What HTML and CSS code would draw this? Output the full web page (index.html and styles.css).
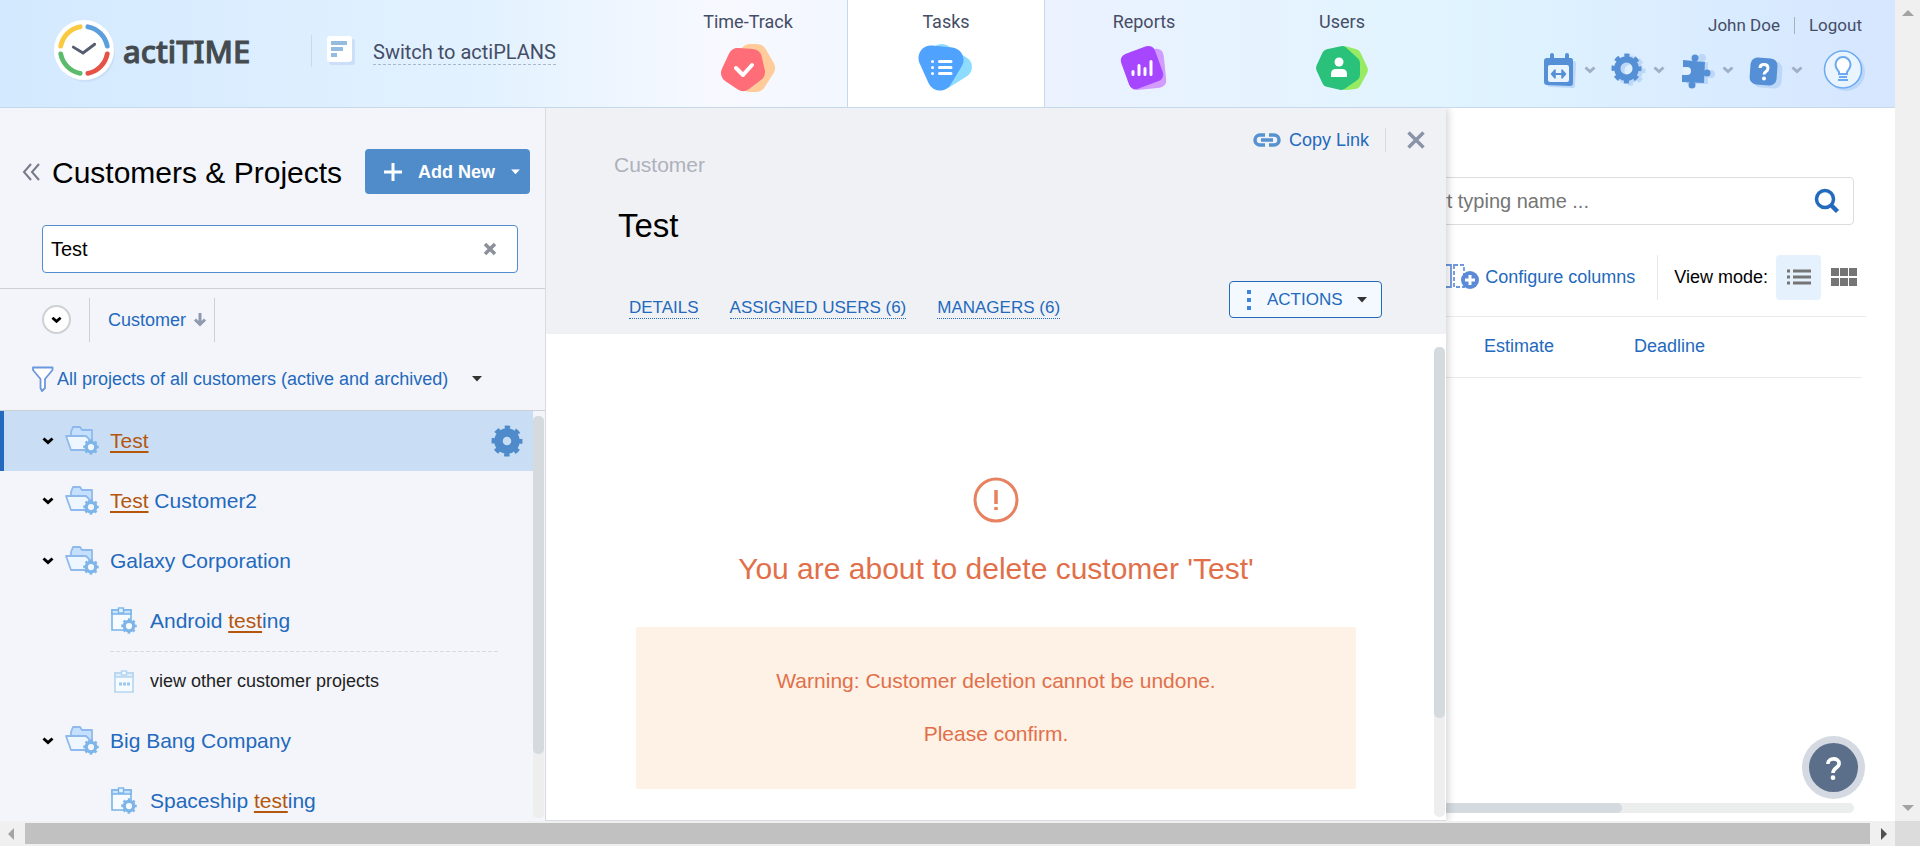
FILE: index.html
```html
<!DOCTYPE html>
<html lang="en">
<head>
<meta charset="utf-8">
<title>actiTIME - Tasks</title>
<link rel="stylesheet" href="styles.css">
</head>
<body>
<svg class="defs" aria-hidden="true">
  <symbol id="gear" viewBox="0 0 32 32">
    <circle cx="16" cy="16" r="8.500" fill="none" stroke="currentColor" stroke-width="8.500"/>
    <circle cx="16" cy="16" r="13.500" fill="none" stroke="currentColor" stroke-width="4" stroke-dasharray="5.300 5.300" stroke-dashoffset="2.650"/>
  </symbol>
  <symbol id="gear-open" viewBox="0 0 32 32">
    <circle cx="16" cy="16" r="9.500" fill="none" stroke="currentColor" stroke-width="6.500"/>
    <circle cx="16" cy="16" r="13.500" fill="none" stroke="currentColor" stroke-width="4" stroke-dasharray="5.300 5.300" stroke-dashoffset="2.650"/>
  </symbol>
  <symbol id="folder" viewBox="0 0 34 32">
    <path d="M6 12V7L8 2H15L17 5H27V20H8Z" fill="#c5e0ff" stroke="#8fb9ec" stroke-width="1.8" stroke-linejoin="round"/>
    <path d="M1 11H21L24 14V25H6Z" fill="#eef6ff" stroke="#8fb9ec" stroke-width="1.8" stroke-linejoin="round"/>
    <circle cx="26" cy="22" r="5" fill="#f3f7fd"/>
    <g class="tone-gear"><use href="#gear-open" x="18" y="14" width="16" height="16"/></g>
  </symbol>
  <symbol id="project" viewBox="0 0 28 28">
    <path d="M2 3H21V23H2Z" fill="#f6fbff" stroke="#79b4ea" stroke-width="1.6"/>
    <path d="M2 3H21V7H2Z" fill="#c9e3fb" stroke="#79b4ea" stroke-width="1.4"/>
    <rect x="8.500" y="1" width="5" height="5" fill="#e6f3ff" stroke="#79b4ea" stroke-width="1.4"/>
    <circle cx="19" cy="19" r="5" fill="#f6fbff"/>
    <g class="tone-gear"><use href="#gear-open" x="11" y="11" width="16" height="16"/></g>
  </symbol>
  <symbol id="chev" viewBox="0 0 12 8"><path d="M1.500 1.500 6 5.500 10.500 1.500" fill="none" stroke="currentColor" stroke-width="3"/></symbol>
  <symbol id="caret" viewBox="0 0 10 6"><path d="M0 0H10L5 5.500Z" fill="currentColor"/></symbol>
</svg>

<div class="window">
  <div class="app">
    <header class="header">
      <div class="brand">
        <svg class="logo" viewBox="0 0 64 66" aria-hidden="true">
          <circle cx="34" cy="35" r="30" fill="#cbdff8"/>
          <circle cx="32" cy="32" r="31" fill="#fff"/>
          <g fill="none" stroke-width="5" stroke-linecap="round">
            <path d="M36 8A25 25 0 0 1 56 28" stroke="#5c9fdc"/>
            <path d="M56 36A25 25 0 0 1 36 56" stroke="#e75247"/>
            <path d="M28 56A25 25 0 0 1 8 36" stroke="#5bbb6b"/>
            <path d="M8 28A25 25 0 0 1 28 8" stroke="#f9c940"/>
            <path d="M21 29 31 35 43 26" stroke="#565d70" stroke-width="3"/>
          </g>
        </svg>
        <span class="wordmark">actiTIME</span>
        <div class="switch">
          <svg class="plans" viewBox="0 0 28 30" aria-hidden="true">
            <rect x="2" y="3" width="26" height="26" rx="3" fill="#cbdff8"/>
            <rect width="25" height="26" rx="3" fill="#fff"/>
            <g stroke="#94bce0" stroke-width="4"><path d="M4 7H20M4 13H16M4 19H10"/></g>
          </svg>
          <a href="#plans">Switch to actiPLANS</a>
        </div>
      </div>
      <nav class="nav">
        <a href="#time">Time-Track
          <svg viewBox="0 0 64 56"><g stroke-linejoin="round">
            <path d="M34 14H41L49 28 40 42H34L24 26Z" fill="#ffcb9b" stroke="#ffcb9b" stroke-width="20"/>
            <path d="M22 18 36 19 39 32 27 41 15 33Z" fill="#ff6d79" stroke="#ff6d79" stroke-width="20"/></g>
            <path d="M20 28 27 35 36 25" fill="none" stroke="#fff" stroke-width="4" stroke-linecap="round" stroke-linejoin="round"/></svg></a>
        <a href="#tasks" class="active" aria-current="page">Tasks
          <svg viewBox="0 0 64 56"><g stroke-linejoin="round">
            <path d="M28 15 47 27 28 39Z" fill="#8ddcff" stroke="#8ddcff" stroke-width="22"/>
            <path d="M17 18 37 20 26 38Z" fill="#4fa3ff" stroke="#4fa3ff" stroke-width="25"/></g>
            <path d="M18.500 21.500v.01M18.500 27.500v.01M18.500 33.500v.01M25.500 21.500H37M25.500 27.500H37M25.500 33.500H37" stroke="#fff" stroke-width="3" stroke-linecap="round"/></svg></a>
        <a href="#reports">Reports
          <svg viewBox="0 0 64 56">
            <rect x="16" y="10" width="37" height="39" rx="7" fill="#d29cff" transform="rotate(-6 34 29)"/>
            <rect x="12" y="9" width="36" height="37" rx="7" fill="#a646ff" transform="rotate(-20 30 27.500)"/>
            <path d="M21 31.500V34.500M27 25.500V34.500M33 28.500V34.500M39 21.500V34.500" stroke="#fff" stroke-width="3" stroke-linecap="round"/></svg></a>
        <a href="#users">Users
          <svg viewBox="0 0 64 56"><g stroke-linejoin="round">
            <path d="M34 12 45 15 52 30 45 43 36 44 30 28Z" fill="#97eb62" stroke="#97eb62" stroke-width="12"/>
            <path d="M12 28 18 15 32 12 44 23V35L31 44 18 41Z" fill="#2ac27b" stroke="#2ac27b" stroke-width="12"/></g>
            <circle cx="29" cy="22" r="4.500" fill="#fff"/><path d="M21 37V34Q21 29 26 29H32Q37 29 37 34V37Z" fill="#fff"/></svg></a>
      </nav>
      <div class="account">
        <div class="account-links"><a href="#me">John Doe</a><span class="bar"></span><a href="#logout">Logout</a></div>
        <div class="tools">
          <button type="button" aria-label="Calendar"><svg class="tool" viewBox="0 0 36 40">
            <path d="M4 11H30Q32 11 32 14L31 36Q31 38 28 38L7 37Q3 37 3 34Z" fill="#bcd7f8"/>
            <path d="M3 8H27Q29 8 29 11V33Q29 36 26 36L3 35Q0 35 0 32V11Q0 8 3 8Z" fill="#5590d6"/>
            <path d="M8 5V9M23 5V9" stroke="#5590d6" stroke-width="4" stroke-linecap="round"/>
            <rect x="4" y="15" width="21" height="17" rx="2" fill="#e9f4ff"/>
            <path d="M9 24H20" stroke="#5590d6" stroke-width="2"/>
            <path d="M11 20 7.500 24 11 28ZM18 20 21.500 24 18 28Z" fill="#5590d6" stroke="#5590d6" stroke-width="1.5" stroke-linejoin="round"/></svg>
            <svg class="tool-chev" viewBox="0 0 12 8"><use href="#chev"/></svg></button>
          <button type="button" aria-label="Settings"><svg class="tool" viewBox="0 0 36 40">
            <g class="tone-shadow"><use href="#gear-open" x="2" y="5" width="31" height="31"/></g>
            <g class="tone-tool"><use href="#gear-open" x="-2" y="3" width="31" height="31"/></g></svg>
            <svg class="tool-chev" viewBox="0 0 12 8"><use href="#chev"/></svg></button>
          <button type="button" aria-label="Integrations"><svg class="tool" viewBox="0 0 36 40">
            <g fill="#bcd7f8"><circle cx="20" cy="8" r="4"/><circle cx="29" cy="24" r="4"/><path d="M5 12H26V34H5Z"/></g>
            <g fill="#5590d6"><circle cx="13" cy="8" r="3.500"/><circle cx="25" cy="23" r="3.500"/><circle cx="10" cy="35" r="3.500"/>
            <path d="M1 10 23 12 22 33 0 32V25H3A4 4 0 0 0 3 17H1Z"/></g>
            <circle cx="5" cy="21" r="4" fill="#e3f1ff"/></svg>
            <svg class="tool-chev" viewBox="0 0 12 8"><use href="#chev"/></svg></button>
          <button type="button" aria-label="Help"><svg class="tool" viewBox="0 0 36 40">
            <rect x="3" y="11" width="28" height="27" rx="7" fill="#bcd7f8" transform="rotate(4 17 24)"/>
            <rect x="-1" y="8" width="27" height="27" rx="7" fill="#5590d6" transform="rotate(4 13 22)"/>
            <path d="M9 18Q9 14.500 13 14.500T17 18Q17 20 15 21.500T13 24.500" fill="none" stroke="#fff" stroke-width="3"/><circle cx="13" cy="28.500" r="2" fill="#fff"/></svg>
            <svg class="tool-chev" viewBox="0 0 12 8"><use href="#chev"/></svg></button>
          <button type="button" aria-label="Tips"><svg class="bulb" viewBox="0 0 44 40">
            <circle cx="26" cy="22" r="19" fill="#bcd7f8"/><circle cx="23" cy="19.500" r="18.500" fill="#e9f4ff" stroke="#6caaf2" stroke-width="1.500"/>
            <path d="M19 24V22C18 20 15.500 18.500 15.500 14.500A7.500 7.500 0 0 1 30.500 14.500C30.500 18.500 28 20 27 22V24Z" fill="#fff" stroke="#6caaf2" stroke-width="2"/>
            <path d="M18 30H28M19 27H27" stroke="#6caaf2" stroke-width="2"/></svg></button>
        </div>
      </div>
    </header>

    <main class="body">
      <aside class="side">
        <div class="side-top">
          <button type="button" class="collapse" aria-label="Collapse"><svg viewBox="0 0 18 18"><path d="M9 1 2 9 9 17M17 1 10 9 17 17" fill="none" stroke="#747a87" stroke-width="2"/></svg></button>
          <h1>Customers &amp; Projects</h1>
          <button type="button" class="add-new"><svg class="plus" viewBox="0 0 18 18"><path d="M9 0V18M0 9H18" stroke="#fff" stroke-width="3"/></svg><span>Add New</span><svg class="caret" viewBox="0 0 10 6"><use href="#caret"/></svg></button>
        </div>
        <div class="side-search">
          <input type="text" value="Test" aria-label="Search customers and projects">
          <button type="button" aria-label="Clear"><svg viewBox="0 0 14 14"><path d="M2 2 12 12M12 2 2 12" stroke="#8b9099" stroke-width="3.500"/></svg></button>
        </div>
        <div class="sort">
          <button type="button" class="expand" aria-label="Expand all"><svg viewBox="0 0 12 8"><use href="#chev"/></svg></button>
          <a href="#sort" class="sort-by">Customer<svg viewBox="0 0 12 14"><path d="M6 0V11M1 6.500 6 11.500 11 6.500" fill="none" stroke="#8f9ab0" stroke-width="3"/></svg></a>
        </div>
        <a href="#filter" class="filter"><svg class="funnel" viewBox="0 0 22 26"><path d="M1 1.500H20.500V4L13 13V22L10 25 8.500 22V13L1 4Z" fill="#fff" stroke="#6d97dc" stroke-width="1.800" stroke-linejoin="round"/></svg><span>All projects of all customers (active and archived)</span><svg class="caret" viewBox="0 0 10 6"><use href="#caret"/></svg></a>
        <div class="tree-wrap">
          <ul class="tree">
            <li class="selected"><svg class="arrow" viewBox="0 0 12 8"><use href="#chev"/></svg><svg class="folder"><use href="#folder"/></svg><a href="#c1"><mark>Test</mark></a><button type="button" class="row-gear" aria-label="Customer settings"><svg viewBox="0 0 32 32"><use href="#gear"/></svg></button></li>
            <li><svg class="arrow" viewBox="0 0 12 8"><use href="#chev"/></svg><svg class="folder"><use href="#folder"/></svg><a href="#c2"><mark>Test</mark> Customer2</a></li>
            <li><svg class="arrow" viewBox="0 0 12 8"><use href="#chev"/></svg><svg class="folder"><use href="#folder"/></svg><a href="#c3">Galaxy Corporation</a></li>
            <li class="child"><svg class="project"><use href="#project"/></svg><a href="#p1">Android <mark>test</mark>ing</a></li>
            <li class="child other"><svg class="project" viewBox="0 0 28 28"><g fill="#f6fbff" stroke="#b5d5f0" stroke-width="1.600"><path d="M5 6H23V25H5Z"/><path d="M5 6H23V10H5Z" fill="#dcedfb"/><path d="M11.500 4H16.500V8H11.500Z"/></g><path d="M9 17H20" stroke="#9cc8ee" stroke-width="3" stroke-dasharray="3 1"/></svg><a href="#more">view other customer projects</a></li>
            <li><svg class="arrow" viewBox="0 0 12 8"><use href="#chev"/></svg><svg class="folder"><use href="#folder"/></svg><a href="#c4">Big Bang Company</a></li>
            <li class="child"><svg class="project"><use href="#project"/></svg><a href="#p2">Spaceship <mark>test</mark>ing</a></li>
          </ul>
          <div class="vtrack"><div class="vthumb"></div></div>
        </div>
      </aside>

      <section class="content">
        <div class="task-search">
          <input type="text" placeholder="Start typing name ..." aria-label="Search tasks">
          <svg viewBox="0 0 24 24"><circle cx="10" cy="10" r="8.500" fill="none" stroke="#2369bd" stroke-width="3.500"/><path d="M16 16 22.500 22.500" stroke="#2369bd" stroke-width="4.500"/></svg>
        </div>
        <div class="toolbar">
          <a href="#columns" class="configure"><svg viewBox="0 0 44 26"><g fill="#fff" stroke="#6d97dc" stroke-width="1.800"><path d="M1 1H15V23H1Z"/><path d="M18 1H28V23H18Z" stroke-dasharray="4 2"/></g><circle cx="34" cy="16" r="9" fill="#5b8bd6"/><path d="M34 11V21M29 16H39" stroke="#fff" stroke-width="3"/></svg>Configure columns</a>
          <span class="view-label">View mode:</span>
          <button type="button" class="view on" aria-label="List view"><svg viewBox="0 0 26 18"><path d="M1 3H4M7 3H25M1 9H4M7 9H25M1 15H4M7 15H25" stroke="#757575" stroke-width="3"/></svg></button>
          <button type="button" class="view" aria-label="Grid view"><svg viewBox="0 0 26 18"><path d="M0 4H26M0 14H26" stroke="#757575" stroke-width="8" stroke-dasharray="8 1"/></svg></button>
        </div>
        <table class="tasks">
          <thead><tr><td></td><th class="col-estimate" scope="col"><a href="#estimate">Estimate</a></th><th class="col-deadline" scope="col"><a href="#deadline">Deadline</a></th></tr></thead>
        </table>
        <div class="htrack"><div class="hthumb"></div></div>

        <div class="detail">
          <div class="detail-head">
            <div class="detail-tools">
              <a href="#copy"><svg class="link" viewBox="0 0 28 14"><g fill="none" stroke="#5792cf" stroke-width="3.500"><path d="M12 2H7A5 5 0 0 0 7 12H12"/><path d="M16 2H21A5 5 0 0 1 21 12H16"/><path d="M8 7H20"/></g></svg>Copy Link</a>
              <button type="button" aria-label="Close"><svg viewBox="0 0 18 18"><path d="M1.500 1.500 16.500 16.500M16.500 1.500 1.500 16.500" stroke="#8a93a8" stroke-width="3.500"/></svg></button>
            </div>
            <p class="kind">Customer</p>
            <h2>Test</h2>
            <div class="tabs">
              <a href="#details">DETAILS</a><a href="#assigned">ASSIGNED USERS (6)</a><a href="#managers">MANAGERS (6)</a>
              <button type="button" class="actions"><svg class="dots" viewBox="0 0 4 20"><path d="M2 0V20" stroke="#3b86d8" stroke-width="4" stroke-dasharray="4"/></svg>ACTIONS<svg class="caret" viewBox="0 0 10 6"><use href="#caret"/></svg></button>
            </div>
          </div>
          <div class="detail-body">
            <div class="alert">
              <svg viewBox="0 0 46 46"><circle cx="23" cy="23" r="21" fill="none" stroke="#e8815f" stroke-width="3"/><path d="M23 13V27M23 30V33" stroke="#e8815f" stroke-width="3.500"/></svg>
              <h3>You are about to delete customer 'Test'</h3>
              <div class="warning"><p>Warning: Customer deletion cannot be undone.</p><p>Please confirm.</p></div>
            </div>
            <div class="vtrack"><div class="vthumb"></div></div>
          </div>
        </div>
        <button type="button" class="help" aria-label="Help center"><svg viewBox="0 0 48 48"><path d="M18.500 20.500C18.500 14 29.500 14 29.500 20 29.500 24.500 23.500 24 23.500 29.500" fill="none" stroke="#fff" stroke-width="3.500"/><circle cx="23.500" cy="34" r="2.300" fill="#fff"/></svg></button>
      </section>
    </main>
  </div>
  <div class="win-v"><svg viewBox="0 0 12 6"><path d="M0 6H12L6 0Z" fill="#a3a3a3"/></svg><svg viewBox="0 0 12 6"><path d="M0 0H12L6 6Z" fill="#a3a3a3"/></svg></div>
  <div class="win-h"><svg viewBox="0 0 6 12"><path d="M6 0V12L0 6Z" fill="#a3a3a3"/></svg><div class="win-thumb"></div><svg viewBox="0 0 6 12"><path d="M0 0V12L6 6Z" fill="#505050"/></svg></div>
  <div class="win-corner"></div>
</div>
</body>
</html>
```
FILE: styles.css
```css
* { box-sizing: border-box; }
body { margin: 0; font-family: "Liberation Sans", Arial, sans-serif; font-size: 18px; line-height: 24px; color: #000; background: #fff; }
h1, h2, h3, p, ul { margin: 0; padding: 0; font-weight: 400; }
ul { list-style: none; }
a { color: #2369bd; text-decoration: none; }
button { font: inherit; color: inherit; background: none; border: 0; padding: 0; cursor: pointer; }
input { font: inherit; }
svg { display: block; flex: none; overflow: visible; }
.defs { position: absolute; width: 0; height: 0; }
.tone-gear { color: #7eb5e8; }
.tone-tool { color: #5590d6; }
.tone-shadow { color: #bcd7f8; }
.caret { width: 10px; height: 6px; }

.window { display: grid; grid-template: 1fr 25px / 1fr 25px; height: 100vh; }
.app { display: flex; flex-direction: column; min-width: 0; min-height: 0; }

/* Header */
.header { display: flex; flex: none; height: 108px; border-bottom: 1px solid #c5d8ec; background: linear-gradient(90deg, #d3e9ff 0%, #e3f2ff 26%, #f7f9ff 38%, #eaf2ff 58%, #e0f4ff 77%, #d5e6ff 100%); font-family: Roboto, sans-serif; }
.header a { color: #454d66; }
.brand { display: flex; align-items: center; flex: none; width: 649px; padding: 0 0 6px 53px; }
.logo { width: 62px; height: 64px; }
.wordmark { margin-left: 8px; width: 188px; font: 500 31px/40px "Noto Sans", sans-serif; color: #444a4d; -webkit-text-stroke: 1px #444a4d; }
.switch { display: flex; align-items: center; height: 32px; padding-left: 15px; border-left: 1px solid #c3dcf6; }
.plans { width: 28px; height: 30px; }
.switch a { margin-left: 18px; font-size: 20px; line-height: 24px; margin-top: 3px; border-bottom: 1px dashed #a9b9cc; }
.nav { display: flex; }
.nav a { display: flex; flex-direction: column; align-items: center; width: 198px; padding-top: 10px; font-size: 18px; border: 1px none #c5d8ec; }
.nav a.active { background: #fff; border-style: none solid; }
.nav svg { width: 64px; height: 56px; margin-top: 6px; }
.account { margin-left: auto; padding: 14px 31px 0 0; }
.account-links { display: flex; justify-content: flex-end; align-items: center; gap: 15px; font-size: 17px; line-height: 22px; margin-right: 2px; }
.account-links { gap: 14px; }
.account-links .bar { width: 1px; height: 17px; background: #a9b0bd; }
.tools { display: flex; gap: 17px; margin-top: 14px; }
.tools button { display: flex; align-items: center; gap: 4px; color: #9fb0c6; }
.tool { width: 36px; height: 40px; }
.tool-chev { width: 12px; height: 8px; }
.bulb { width: 44px; height: 40px; }

.body { display: flex; flex: 1; min-height: 0; }

/* Customers and projects */
.side { display: flex; flex-direction: column; flex: none; width: 546px; background: #f3f5fa; border-right: 1px solid #d8dbe1; }
.side-top { display: flex; align-items: center; padding: 41px 15px 0 22px; }
.collapse svg { width: 18px; height: 18px; }
.side h1 { margin: 2px 0 0 12px; font-size: 30px; line-height: 40px; }
.add-new { display: flex; align-items: center; gap: 16px; width: 165px; height: 45px; margin-left: auto; padding: 0 13px 0 19px; border-radius: 4px; background: #518cca; color: #fff; font-weight: 700; }
.add-new .plus { width: 18px; height: 18px; }
.add-new .caret { margin-left: auto; width: 9px; height: 6px; }
.add-new span { white-space: nowrap; }
.side-search { display: flex; align-items: center; height: 48px; margin: 31px 27px 15px 42px; padding-right: 20px; border: 1px solid #4f8dcb; border-radius: 4px; background: #fff; }
.side-search input { flex: 1; min-width: 0; border: 0; outline: 0; padding: 0 0 0 8px; background: none; font-size: 20px; }
.side-search svg { width: 14px; height: 14px; }
.sort { display: flex; align-items: center; height: 62px; padding-left: 42px; border-top: 1px solid #cdd0d4; }
.expand { display: flex; align-items: center; justify-content: center; width: 29px; height: 29px; border: 2px solid #cfd0d2; border-radius: 50%; background: #fff; }
.expand svg { width: 11px; height: 8px; }
.sort-by { display: flex; align-items: center; gap: 8px; height: 44px; margin-left: 18px; padding: 0 8px 0 18px; border: solid #cdd0d4; border-width: 0 1px; }
.sort-by svg { width: 12px; height: 14px; }
.filter { display: flex; align-items: center; height: 61px; padding: 0 0 2px 32px; border-bottom: 1px solid #cdd0d4; }
.filter .funnel { width: 22px; height: 26px; margin-right: 3px; }
.filter .caret { margin-left: 24px; color: #333; }
.tree-wrap { display: flex; flex: 1; min-height: 0; overflow: hidden; }
.tree { flex: 1; }
.tree li { display: flex; align-items: center; gap: 11px; height: 60px; padding-left: 42px; font-size: 21px; }
.tree .selected { background: #c9def4; box-shadow: inset 4px 0 #2369bd; }
.tree .child { gap: 12px; padding-left: 110px; }
.tree .other { font-size: 18px; background: repeating-linear-gradient(90deg, #d6d9de 0 4px, transparent 4px 6px) 110px 0 / 390px 1px no-repeat; }
.tree .other a { color: #222; }
.arrow { width: 12px; height: 8px; }
.folder { width: 34px; height: 32px; }
.project { width: 28px; height: 28px; }
.row-gear { margin: 0 10px 0 auto; color: #4f8bca; }
.row-gear svg { width: 32px; height: 32px; }
mark { background: none; color: #b5560d; text-decoration: underline 2px; text-underline-offset: 3px; text-decoration-skip-ink: none; }
.vtrack { flex: none; width: 11px; margin: 5px 1px 3px 0; border-radius: 5px; background: #eee; }
.vthumb { height: 84%; border-radius: 5px; background: #d4dade; }

/* Task list */
.content { position: relative; display: flex; flex-direction: column; flex: 1; min-width: 0; background: #fff; }
.task-search { display: flex; align-items: center; align-self: flex-end; width: 458px; height: 48px; margin: 69px 41px 0 0; padding: 0 14px 0 13px; border: 1px solid #ddd; border-radius: 4px; }
.task-search input { flex: 1; min-width: 0; border: 0; outline: 0; padding: 0; font-size: 20px; }
.task-search input::placeholder { color: #757575; opacity: 1; }
.task-search svg { width: 24px; height: 24px; }
.toolbar { display: flex; align-items: center; justify-content: flex-end; height: 92px; margin-right: 29px; padding-top: 13px; border-bottom: 1px solid #eaeaea; }
.configure { display: flex; align-items: center; gap: 5px; margin-right: 22px; }
.configure svg { width: 44px; height: 26px; }
.view-label { height: 45px; padding: 0 8px 0 16px; line-height: 45px; border-left: 1px solid #e8e8e8; }
.view { display: flex; align-items: center; justify-content: center; width: 45px; height: 45px; border-radius: 4px; }
.view.on { background: #e5f2fd; }
.view svg { width: 26px; height: 18px; }
.tasks { margin-right: 33px; border-collapse: collapse; border-bottom: 1px solid #eaeaea; }
.tasks th { height: 60px; padding: 0 0 2px; font-weight: 400; text-align: left; }
.col-estimate { width: 150px; }
.col-deadline { width: 228px; }
.htrack { height: 10px; margin: auto 41px 8px 20px; border-radius: 5px; background: #eceeee; }
.hthumb { width: 82%; height: 10px; border-radius: 5px; background: #d4dade; }
.help { position: absolute; right: 30px; bottom: 22px; width: 63px; height: 63px; padding: 7px; border-radius: 50%; background: #d5dae2; }
.help svg { width: 49px; height: 49px; border-radius: 50%; background: #5c6f8a; }

/* Customer details panel, slides over the task list */
.detail { position: absolute; top: 0; bottom: 0; left: 0; display: flex; flex-direction: column; width: 900px; background: #fff; border-bottom: 1px solid #d8dbe1; box-shadow: 2px 0 8px rgba(0, 0, 0, .18); clip-path: inset(0 -14px 0 0); }
.detail-head { padding: 20px 21px 0 68px; height: 226px; background: #f0f1f5; }
.detail-tools { display: flex; justify-content: flex-end; align-items: center; }
.detail-tools a { display: flex; align-items: center; gap: 8px; padding-right: 16px; border-right: 1px solid #d5d8df; }
.link { width: 28px; height: 14px; }
.detail-tools button { margin-left: 21px; }
.detail-tools button svg { width: 18px; height: 18px; }
.kind { font-size: 21px; color: #adb1bb; margin-top: 1px; }
.detail h2 { margin: 29px 0 0 4px; font-size: 33px; line-height: 40px; }
.tabs { display: flex; align-items: center; gap: 31px; margin-top: 35px; padding: 0 43px 0 15px; height: 37px; font-size: 17px; }
.tabs a { line-height: 20px; margin-top: 18px; border-bottom: 1px dotted #2369bd; }
.actions { display: flex; align-items: center; width: 153px; height: 37px; margin-left: auto; padding: 0 14px 0 17px; border: 1px solid #2369bd; border-radius: 4px; background: #f4f9ff; color: #2369bd; }
.dots { width: 4px; height: 20px; margin-right: 16px; }
.actions .caret { margin-left: auto; color: #333; }
.detail-body { display: flex; flex: 1; min-height: 0; }
.detail-body .vtrack { margin-top: 13px; }
.detail-body .vthumb { height: 79%; }
.alert { display: flex; flex-direction: column; align-items: center; flex: 1; padding: 143px 78px 0 90px; color: #e1704a; }
.alert svg { width: 46px; height: 46px; }
.alert h3 { margin: 26px 0 38px; font-size: 30px; line-height: 40px; }
.warning { align-self: stretch; padding: 39px 20px 40px; background: #fef1e6; text-align: center; font-size: 21px; line-height: 30px; }
.warning p + p { margin-top: 23px; }

/* Window scroll bars */
.win-v { display: flex; flex-direction: column; align-items: center; justify-content: space-between; padding: 10px 0; background: #f0f0f0; }
.win-v svg { width: 12px; height: 6px; }
.win-h { display: flex; align-items: center; gap: 11px; padding: 2px 8px 2px; background: #f0f0f0; }
.win-h svg { width: 6px; height: 12px; }
.win-thumb { flex: 1; height: 21px; background: #c1c1c1; }
.win-corner { background: #dcdcdc; }
```
